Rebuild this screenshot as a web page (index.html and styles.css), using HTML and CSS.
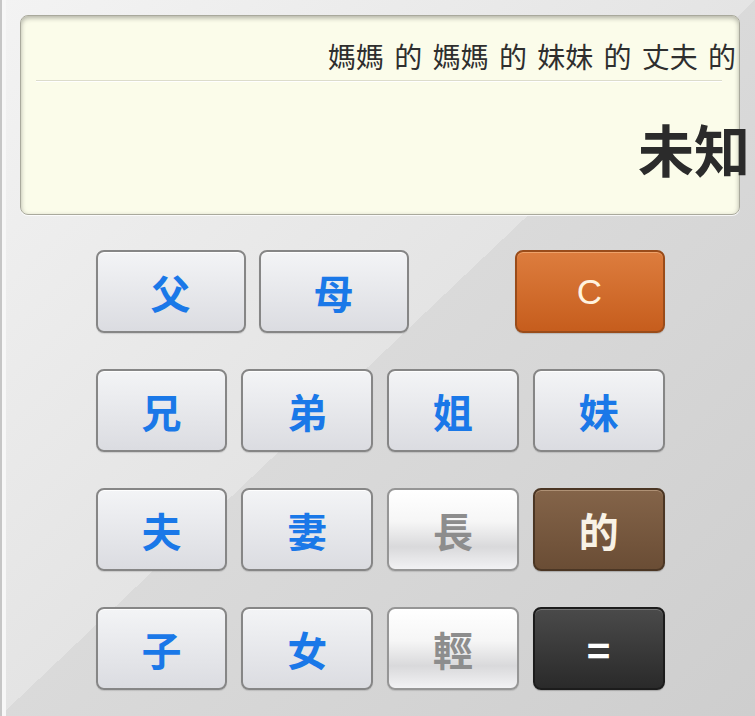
FILE: index.html
```html
<!DOCTYPE html>
<html lang="zh-Hant">

<head>
    <meta charset="UTF-8">
    <meta name="viewport" content="width=device-width, initial-scale=1.0">
    <title>親戚計算器</title>
    <link rel="stylesheet" href="styles.css">
</head>

<body>
    <!-- 顯示區：上方是輸入的稱呼鏈，下方是結果 -->
    <div class="display">
        <div class="expr">媽媽 的 媽媽 的 妹妹 的 丈夫 的</div>
        <div class="rule"></div>
        <div class="result">未知</div>
    </div>

    <div class="keypad">
        <div class="row row-top">
            <button class="key">父</button>
            <button class="key">母</button>
            <button class="key key-clear">C</button>
        </div>
        <div class="row">
            <button class="key">兄</button>
            <button class="key">弟</button>
            <button class="key">姐</button>
            <button class="key">妹</button>
        </div>
        <div class="row">
            <button class="key">夫</button>
            <button class="key">妻</button>
            <button class="key key-age">長</button>
            <button class="key key-of">的</button>
        </div>
        <div class="row">
            <button class="key">子</button>
            <button class="key">女</button>
            <button class="key key-age">輕</button>
            <button class="key key-equal">=</button>
        </div>
    </div>
</body>

</html>
```

FILE: styles.css
```css
html,
body {
    height: 100%;
}

body {
    margin: 0;
    padding: 15px 15px 0 18px;
    box-sizing: border-box;
    overflow: hidden;
    font-family: "Noto Sans CJK TC", "Noto Sans", sans-serif;
    border-left: 2px solid #c6c6c6;
    box-shadow: inset 4px 0 0 #f7f7f7;
    background: linear-gradient(to bottom right, #f3f3f3 0%, #e4e4e4 50%, #dadada 50%, #cecece 100%);
}

.display {
    height: 200px;
    box-sizing: border-box;
    padding-top: 22px;
    background-color: #fbfcea;
    border: 1px solid #a9a99c;
    border-radius: 8px;
    box-shadow: inset 0 2px 5px rgba(0, 0, 0, 0.3), 0 1px 0 rgba(255, 255, 255, 0.8);
}

.expr {
    text-align: right;
    padding-right: 3px;
    font-size: 28px;
    line-height: 36px;
    word-spacing: 4px;
    color: #2e2e2e;
    white-space: nowrap;
}

.rule {
    margin: 6px 17px 0 15px;
    border-top: 1px solid #dcdccb;
    border-bottom: 1px solid #ffffff;
}

.result {
    margin-top: 34px;
    margin-right: -11px;
    text-align: right;
    font-size: 56px;
    line-height: 64px;
    font-weight: bold;
    color: #2b2b2b;
}

.keypad {
    width: 569px;
    margin: 35px auto 0;
    display: flex;
    flex-direction: column;
    gap: 36px;
}

.row {
    display: grid;
    grid-template-columns: repeat(4, 1fr);
    column-gap: 14px;
    height: 83px;
}

.row-top {
    display: flex;
    column-gap: 13px;
}

.row-top .key {
    width: 150px;
}

.row-top .key-clear {
    margin-left: auto;
}

.key {
    margin: 0;
    padding: 0;
    border: 2px solid #868686;
    border-radius: 8px;
    background: linear-gradient(#f3f4f6, #dbdce1);
    box-shadow: inset 0 1px 0 rgba(255, 255, 255, 0.9), 0 1px 1px rgba(0, 0, 0, 0.12);
    font-family: "Noto Sans CJK TC", "Noto Sans", sans-serif;
    font-size: 40px;
    font-weight: bold;
    color: #1a78e8;
}

.key-clear {
    border-color: #9a4c1a;
    background: linear-gradient(#dd7d3e, #c65d1d);
    box-shadow: inset 0 1px 0 rgba(255, 200, 150, 0.5), 0 1px 1px rgba(0, 0, 0, 0.15);
    font-family: "Liberation Sans", Arial, sans-serif;
    font-size: 35px;
    font-weight: normal;
    color: #fff3df;
}

.key-age {
    border-color: #969696;
    background: linear-gradient(#ffffff 0%, #f6f6f6 40%, #d9d9db 72%, #f2f2f4 100%);
    color: #8d8d8d;
}

.key-of {
    border-color: #4b3624;
    background: linear-gradient(#846449, #6a4d35);
    box-shadow: inset 0 1px 0 rgba(255, 230, 200, 0.35), 0 1px 1px rgba(0, 0, 0, 0.2);
    color: #f8f2e6;
}

.key-equal {
    border-color: #1c1c1c;
    background: linear-gradient(#4a4a4a, #2a2a2a);
    box-shadow: inset 0 1px 0 rgba(255, 255, 255, 0.25), 0 1px 1px rgba(0, 0, 0, 0.2);
    color: #ffffff;
}
```
